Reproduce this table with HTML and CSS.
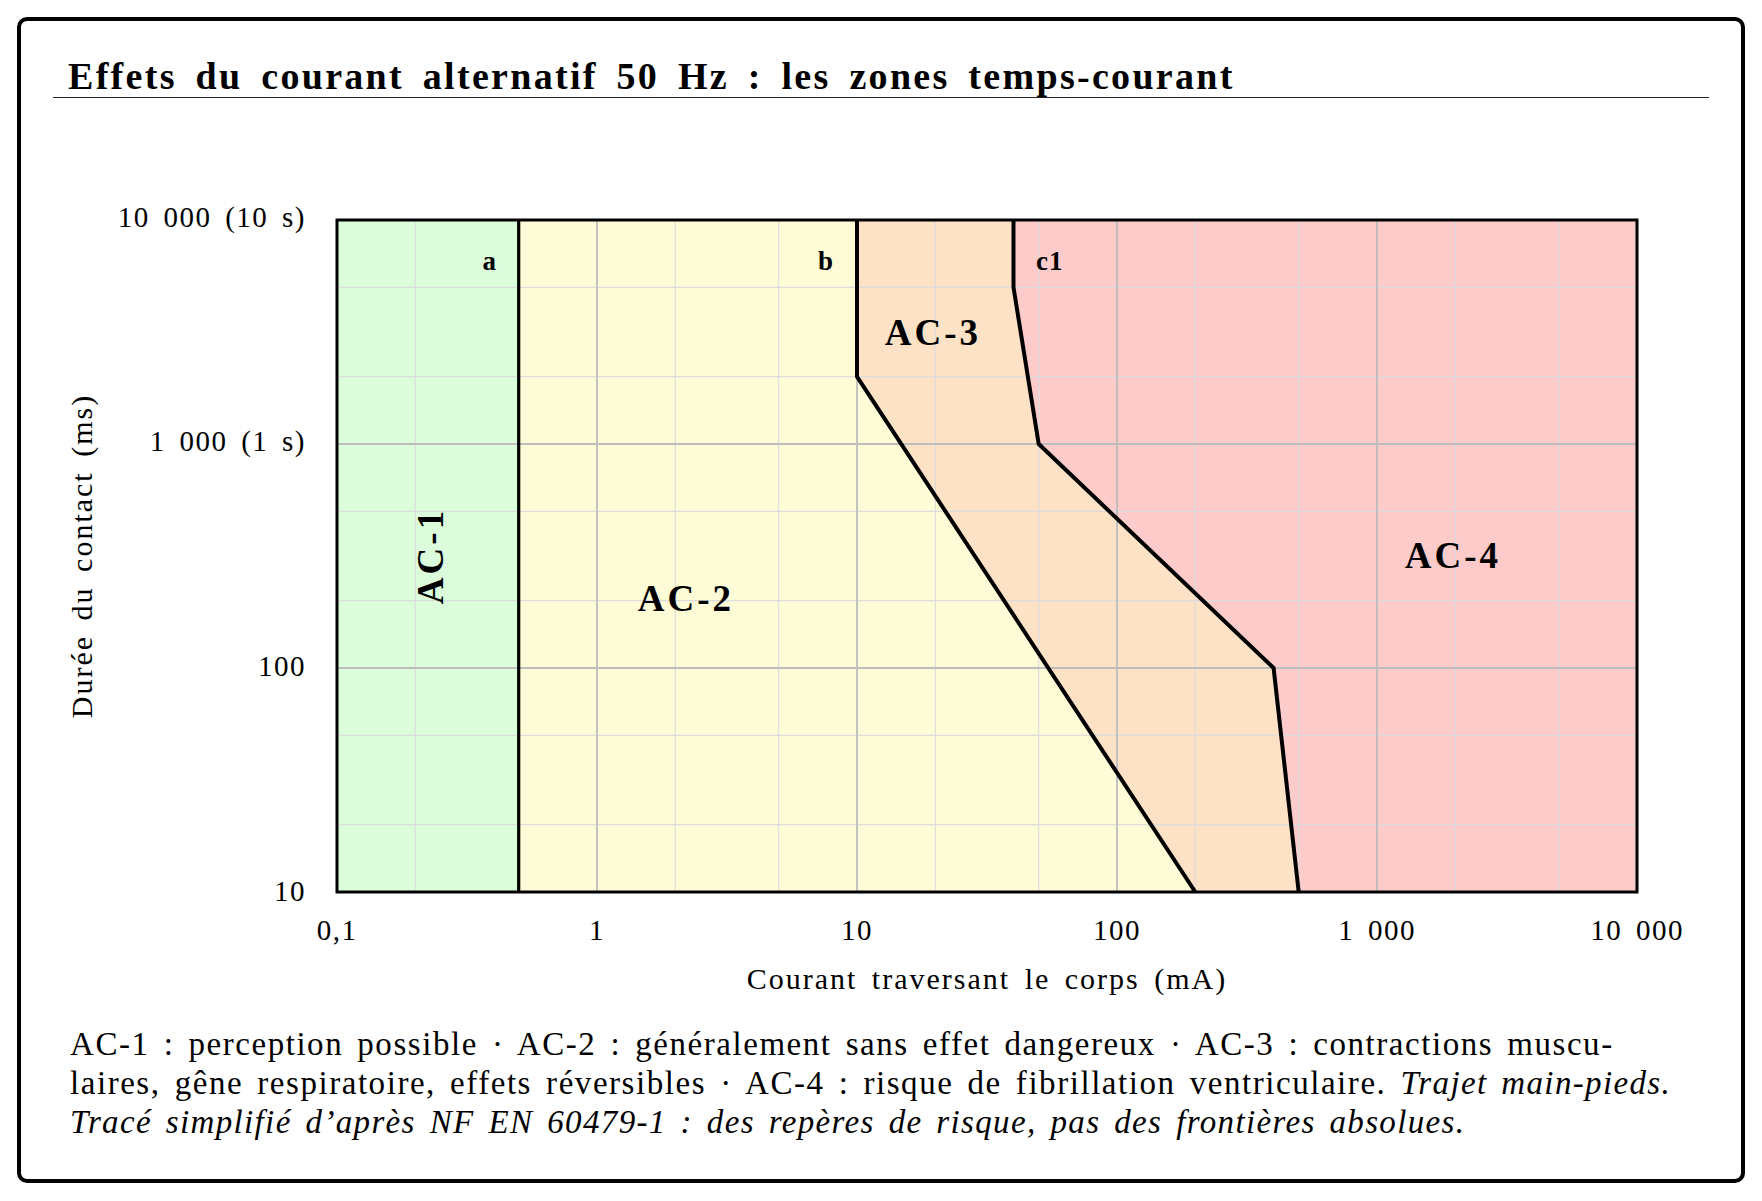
FILE: index.html
```html
<!DOCTYPE html>
<html lang="fr">
<head>
<meta charset="utf-8">
<title>Effets du courant alternatif 50 Hz</title>
<link rel="stylesheet" href="styles.css">
</head>
<body>
<div class="card">
  <h1 class="title">Effets du courant alternatif 50 Hz : les zones temps-courant</h1>
  <svg class="chart" viewBox="21 98 1720 900" width="1720" height="900" xmlns="http://www.w3.org/2000/svg">
    <!-- zones -->
    <rect class="z4" x="337" y="220" width="1300" height="672"/>
    <rect class="z1" x="337" y="220" width="181.7" height="672"/>
    <polygon class="z2" points="518.7,220 857,220 857,376.6 1195.3,892 518.7,892"/>
    <polygon class="z3" points="857,220 1013.5,220 1013.5,287.4 1038.7,444 1273.6,668 1298.7,892 1195.3,892 857,376.6"/>
    <!-- minor grid -->
    <g class="gmin">
      <line x1="415.3" y1="220" x2="415.3" y2="892"/>
      <line x1="675.3" y1="220" x2="675.3" y2="892"/>
      <line x1="778.7" y1="220" x2="778.7" y2="892"/>
      <line x1="935.3" y1="220" x2="935.3" y2="892"/>
      <line x1="1038.7" y1="220" x2="1038.7" y2="892"/>
      <line x1="1195.3" y1="220" x2="1195.3" y2="892"/>
      <line x1="1298.7" y1="220" x2="1298.7" y2="892"/>
      <line x1="1455.3" y1="220" x2="1455.3" y2="892"/>
      <line x1="1558.7" y1="220" x2="1558.7" y2="892"/>
      <line x1="337" y1="824.6" x2="1637" y2="824.6"/>
      <line x1="337" y1="735.4" x2="1637" y2="735.4"/>
      <line x1="337" y1="600.6" x2="1637" y2="600.6"/>
      <line x1="337" y1="511.4" x2="1637" y2="511.4"/>
      <line x1="337" y1="376.6" x2="1637" y2="376.6"/>
      <line x1="337" y1="287.4" x2="1637" y2="287.4"/>
    </g>
    <!-- major grid -->
    <g class="gmaj">
      <line x1="597" y1="220" x2="597" y2="892"/>
      <line x1="857" y1="220" x2="857" y2="892"/>
      <line x1="1117" y1="220" x2="1117" y2="892"/>
      <line x1="1377" y1="220" x2="1377" y2="892"/>
      <line x1="337" y1="668" x2="1637" y2="668"/>
      <line x1="337" y1="444" x2="1637" y2="444"/>
    </g>
    <!-- boundaries -->
    <line class="curve thin" x1="518.7" y1="220" x2="518.7" y2="892"/>
    <polyline class="curve" points="857,220 857,376.6 1195.3,892"/>
    <polyline class="curve" points="1013.5,220 1013.5,287.4 1038.7,444 1273.6,668 1298.7,892"/>
    <rect class="frame" x="337" y="220" width="1300" height="672"/>
    <!-- curve labels -->
    <text class="clab" x="497" y="261" text-anchor="end">a</text>
    <text class="clab" x="834" y="261" text-anchor="end">b</text>
    <text class="clab" x="1036" y="261" text-anchor="start">c1</text>
    <!-- zone labels -->
    <text class="zlab" x="0" y="0" text-anchor="middle" transform="translate(430 556) rotate(-90)">AC-1</text>
    <text class="zlab" x="686" y="598" text-anchor="middle">AC-2</text>
    <text class="zlab" x="933" y="332" text-anchor="middle">AC-3</text>
    <text class="zlab" x="1453" y="555" text-anchor="middle">AC-4</text>
    <!-- y ticks -->
    <text class="tick" x="306" y="217" text-anchor="end">10 000 (10 s)</text>
    <text class="tick" x="306" y="441" text-anchor="end">1 000 (1 s)</text>
    <text class="tick" x="306" y="666" text-anchor="end">100</text>
    <text class="tick" x="306" y="891" text-anchor="end">10</text>
    <!-- x ticks -->
    <text class="tick" x="337" y="930" text-anchor="middle">0,1</text>
    <text class="tick" x="597" y="930" text-anchor="middle">1</text>
    <text class="tick" x="857" y="930" text-anchor="middle">10</text>
    <text class="tick" x="1117" y="930" text-anchor="middle">100</text>
    <text class="tick" x="1377" y="930" text-anchor="middle">1 000</text>
    <text class="tick" x="1637" y="930" text-anchor="middle">10 000</text>
    <!-- axis titles -->
    <text class="atitle" x="987" y="978" text-anchor="middle">Courant traversant le corps (mA)</text>
    <text class="atitle" x="0" y="0" text-anchor="middle" transform="translate(81 556) rotate(-90)">Durée du contact (ms)</text>
  </svg>
  <p class="caption">AC-1 : perception possible · AC-2 : généralement sans effet dangereux · AC-3 : contractions muscu-<br>laires, gêne respiratoire, effets réversibles · AC-4 : risque de fibrillation ventriculaire. <em>Trajet main-pieds.</em><br><em>Tracé simplifié d’après NF EN 60479-1 : des repères de risque, pas des frontières absolues.</em></p>
</div>
</body>
</html>
```
FILE: styles.css
```css
html, body {
  margin: 0;
  padding: 0;
  background: #ffffff;
}

body {
  font-family: "Liberation Serif", "DejaVu Serif", serif;
  color: #000;
}

.card {
  margin: 17px;
  height: 1166px;
  box-sizing: border-box;
  border: 4px solid #000;
  border-radius: 10px;
  padding-top: 34px;
  overflow: hidden;
}

.title {
  margin: 0 32px;
  padding: 0 15px;
  font-size: 38px;
  line-height: 42px;
  font-weight: bold;
  letter-spacing: 2.3px;
  word-spacing: 7px;
  border-bottom: 1px solid #222;
}

.chart {
  display: block;
}

.z1 { fill: #dbfddb; }
.z2 { fill: #fefcd6; }
.z3 { fill: #fde2c6; }
.z4 { fill: #fecbcb; }

.gmin line {
  stroke: #dcdcdc;
  stroke-width: 1.2;
}

.gmaj line {
  stroke: #bdbdbd;
  stroke-width: 1.8;
}

.curve {
  fill: none;
  stroke: #000;
  stroke-width: 4;
}

.curve.thin {
  stroke-width: 3.2;
}

.frame {
  fill: none;
  stroke: #000;
  stroke-width: 3;
}

.clab {
  font-family: "Liberation Serif", serif;
  font-weight: bold;
  font-size: 27px;
  letter-spacing: 1px;
  dominant-baseline: central;
}

.zlab {
  font-family: "Liberation Serif", serif;
  font-weight: bold;
  font-size: 37px;
  letter-spacing: 3px;
  dominant-baseline: central;
}

.tick {
  font-family: "Liberation Serif", serif;
  font-size: 29px;
  letter-spacing: 1.5px;
  word-spacing: 5px;
  dominant-baseline: central;
}

.atitle {
  font-family: "Liberation Serif", serif;
  font-size: 30px;
  letter-spacing: 2px;
  word-spacing: 5px;
  dominant-baseline: central;
}

.caption {
  margin: 27px 0 0 49px;
  font-size: 33px;
  line-height: 39px;
  white-space: nowrap;
  letter-spacing: 1.55px;
  word-spacing: 4.3px;
}

.caption em {
  font-style: italic;
  letter-spacing: 1.35px;
}
```
